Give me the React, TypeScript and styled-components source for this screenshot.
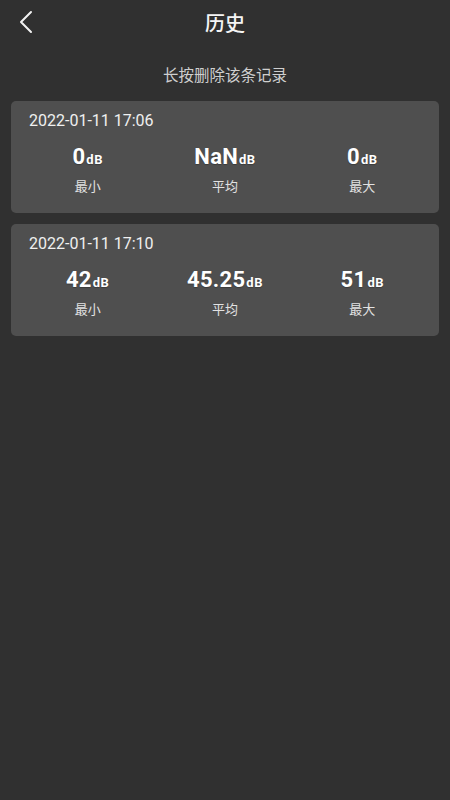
import React from "react";
import styled, { createGlobalStyle } from "styled-components";

const GlobalStyle = createGlobalStyle`
  html, body {
    margin: 0;
    padding: 0;
    background: #303030;
  }
  * {
    box-sizing: border-box;
  }
`;

const Page = styled.div`
  width: 450px;
  min-height: 800px;
  background: #303030;
  color: #f2f2f2;
  font-family: Roboto, "Noto Sans CJK SC", sans-serif;
`;

const Header = styled.div`
  display: grid;
  grid-template-columns: 60px 1fr 60px;
  align-items: center;
  height: 44px;
`;

const BackButton = styled.button`
  display: flex;
  align-items: center;
  padding: 0 0 0 18px;
  height: 44px;
  border: none;
  background: none;
  cursor: pointer;
`;

const Title = styled.h1`
  margin: 0;
  text-align: center;
  font-size: 20px;
  font-weight: 500;
  color: #f5f5f5;
  font-family: "Noto Sans CJK SC", sans-serif;
`;

const Hint = styled.p`
  margin: 20px 0 0;
  height: 20px;
  line-height: 20px;
  text-align: center;
  font-size: 15.5px;
  color: #cfcfcf;
  font-family: "Noto Sans CJK SC", sans-serif;
`;

const List = styled.div`
  display: flex;
  flex-direction: column;
  gap: 11px;
  padding: 17px 11px 0;
`;

const Card = styled.div`
  background: #4f4f4f;
  border-radius: 5px;
  padding: 10px 8px 18px;
`;

const DateText = styled.div`
  padding-left: 10px;
  font-size: 16px;
  line-height: 20px;
  color: #f0f0f0;
`;

const Stats = styled.div`
  display: grid;
  grid-template-columns: repeat(3, 1fr);
  margin-top: 13px;
`;

const Stat = styled.div`
  display: flex;
  flex-direction: column;
  align-items: center;
  gap: 7px;
`;

const Value = styled.div`
  font-size: 22px;
  font-weight: 700;
  line-height: 26px;
  height: 26px;
  color: #ffffff;
  text-shadow: 0 1px 1px rgba(0, 0, 0, 0.25);
  letter-spacing: 0.3px;
`;

const Unit = styled.span`
  font-size: 13px;
  font-weight: 700;
  line-height: 1;
  margin-left: 1px;
  letter-spacing: 0.5px;
`;

const Label = styled.div`
  font-size: 13px;
  line-height: 18px;
  color: #e2e2e2;
  font-family: "Noto Sans CJK SC", sans-serif;
`;

type Record = {
  time: string;
  min: string;
  avg: string;
  max: string;
};

const records: Record[] = [
  { time: "2022-01-11 17:06", min: "0", avg: "NaN", max: "0" },
  { time: "2022-01-11 17:10", min: "42", avg: "45.25", max: "51" },
];

const StatItem = ({ value, label }: { value: string; label: string }) => (
  <Stat>
    <Value>
      {value}
      <Unit>dB</Unit>
    </Value>
    <Label>{label}</Label>
  </Stat>
);

export default function App() {
  return (
    <Page>
      <GlobalStyle />
      <Header>
        <BackButton aria-label="back">
          <svg width="16" height="24" viewBox="0 0 16 24" fill="none">
            <path
              d="M13 2 L3 12 L13 22"
              stroke="#f2f2f2"
              strokeWidth="2"
              strokeLinecap="round"
              strokeLinejoin="round"
            />
          </svg>
        </BackButton>
        <Title>历史</Title>
        <div />
      </Header>
      <Hint>长按删除该条记录</Hint>
      <List>
        {records.map((r) => (
          <Card key={r.time}>
            <DateText>{r.time}</DateText>
            <Stats>
              <StatItem value={r.min} label="最小" />
              <StatItem value={r.avg} label="平均" />
              <StatItem value={r.max} label="最大" />
            </Stats>
          </Card>
        ))}
      </List>
    </Page>
  );
}
